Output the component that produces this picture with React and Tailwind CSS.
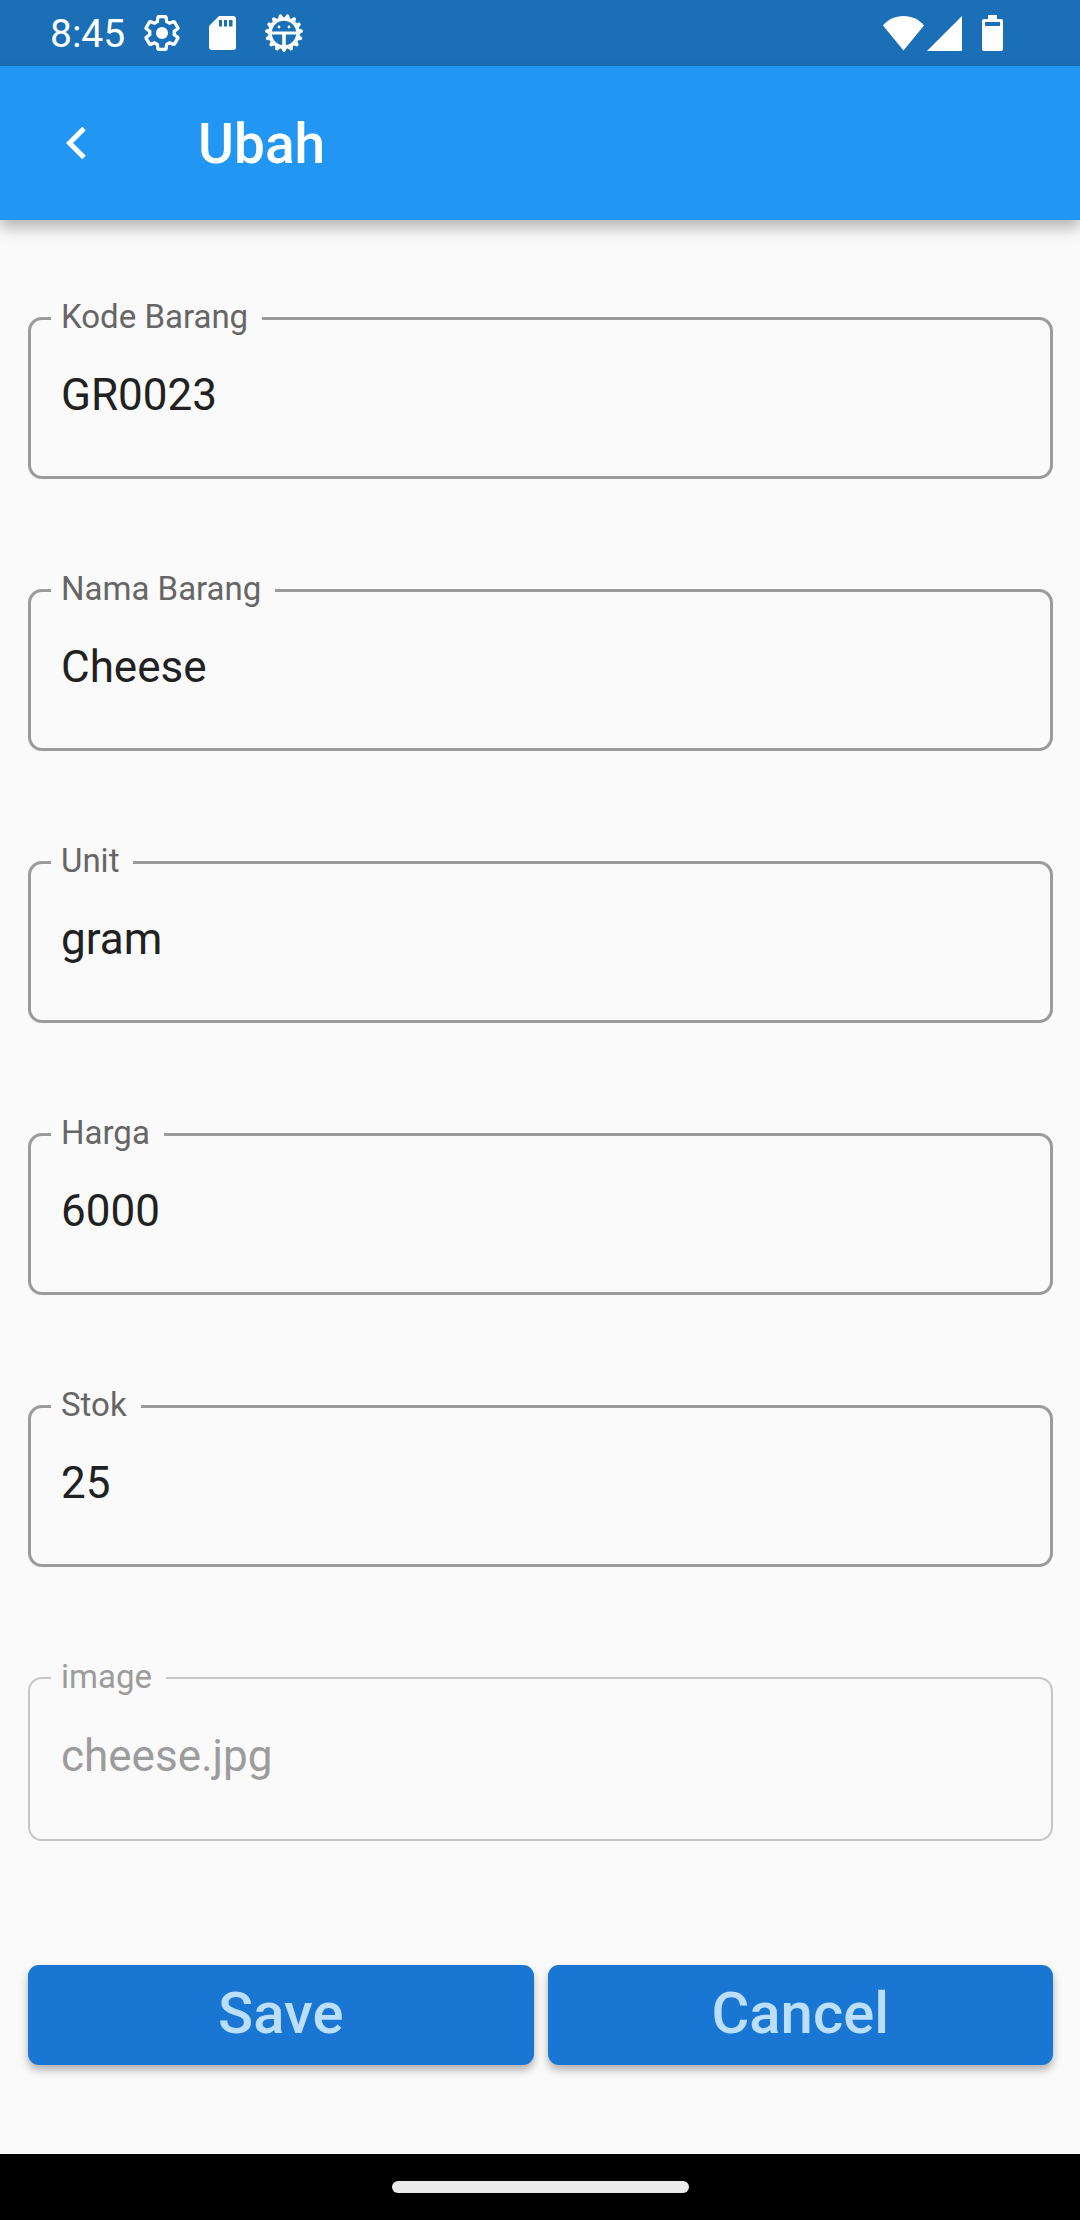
const fields = [
  { id: "kode", label: "Kode Barang", value: "GR0023" },
  { id: "nama", label: "Nama Barang", value: "Cheese" },
  { id: "unit", label: "Unit", value: "gram" },
  { id: "harga", label: "Harga", value: "6000" },
  { id: "stok", label: "Stok", value: "25" },
  { id: "image", label: "image", value: "cheese.jpg", disabled: true },
];

function GearIcon() {
  return (
    <svg className="size-9" viewBox="1 1 22 22" fill="none" aria-hidden="true">
      <path
        stroke="white"
        strokeWidth="2"
        strokeLinejoin="round"
        d="M19.43 12.98c.04-.32.07-.64.07-.98s-.03-.66-.07-.98l2.11-1.65c.19-.15.24-.42.12-.64l-2-3.46c-.09-.16-.26-.25-.44-.25-.06 0-.12.01-.17.03l-2.49 1c-.52-.4-1.08-.73-1.69-.98l-.38-2.65C14.46 2.18 14.25 2 14 2h-4c-.25 0-.46.18-.49.42l-.38 2.65c-.61.25-1.17.59-1.69.98l-2.49-1c-.06-.02-.12-.03-.18-.03-.17 0-.34.09-.43.25l-2 3.46c-.13.22-.07.49.12.64l2.11 1.65c-.04.32-.07.65-.07.98s.03.66.07.98l-2.11 1.65c-.19.15-.24.42-.12.64l2 3.46c.09.16.26.25.44.25.06 0 .12-.01.17-.03l2.49-1c.52.4 1.08.73 1.69.98l.38 2.65c.03.24.24.42.49.42h4c.25 0 .46-.18.49-.42l.38-2.65c.61-.25 1.17-.59 1.69-.98l2.49 1c.06.02.12.03.18.03.17 0 .34-.09.43-.25l2-3.46c.12-.22.07-.49-.12-.64l-2.11-1.65z"
      />
      <circle cx="12" cy="12" r="3.7" fill="white" />
    </svg>
  );
}

function SdCardIcon() {
  return (
    <svg className="h-[34px] w-[27px]" viewBox="0 0 27 34" aria-hidden="true">
      <path
        fill="white"
        fillRule="evenodd"
        d="M10 0H24a3 3 0 0 1 3 3V31a3 3 0 0 1-3 3H3a3 3 0 0 1-3-3V10ZM10 4V10.500H13V4ZM15 4V10.500H18V4ZM20 4V10.500H23.500V4Z"
      />
    </svg>
  );
}

function DebugIcon() {
  const teeth = Array.from({ length: 15 }, (_, i) => i * 24);
  return (
    <svg className="h-10 w-[38px]" viewBox="-19 -20 38 40" fill="none" stroke="white" aria-hidden="true">
      {teeth.map((angle) => (
        <path key={angle} d="M-2.600 14.500L-0.800 18.400H0.800L2.600 14.500Z" fill="white" strokeWidth="1" strokeLinejoin="round" transform={`rotate(${angle})`} />
      ))}
      <circle r="14" strokeWidth="3.6" />
      <path d="M-13 0H13" strokeWidth="3" />
      <path d="M0 0V14" strokeWidth="3.6" />
      <circle cx="-5" cy="-6" r="1.4" fill="white" stroke="none" />
      <circle cx="5" cy="-6" r="1.4" fill="white" stroke="none" />
    </svg>
  );
}

function StatusBar() {
  return (
    <div className="flex h-[66px] items-center justify-between bg-[#1a6fb7] pr-[77px] pl-[50px] text-white">
      <div className="flex items-center">
        <span className="pt-0.5 text-[39px] leading-[48px]">8:45</span>
        <div className="ml-[19px] flex items-center gap-[29px]">
          <GearIcon />
          <SdCardIcon />
          <DebugIcon />
        </div>
      </div>
      <div className="flex items-center">
        <svg className="h-[35px] w-[41px]" viewBox="0 0 41 35" fill="white" aria-hidden="true">
          <path d="M0 9.500C5 3.500 12 0 20.500 0S36 3.500 41 9.500L20.500 34.500Z" />
        </svg>
        <svg className="ml-[3px] size-[35px]" viewBox="0 0 35 35" fill="white" aria-hidden="true">
          <path d="M0 35L35 0V35Z" />
        </svg>
        <svg className="ml-5 h-9 w-[21px]" viewBox="0 0 21 36" fill="white" aria-hidden="true">
          <path fillRule="evenodd" d="M6 0H15V4H19a2 2 0 0 1 2 2V34a2 2 0 0 1-2 2H2a2 2 0 0 1-2-2V6a2 2 0 0 1 2-2H6ZM3 7V11H18V7Z" />
        </svg>
      </div>
    </div>
  );
}

function AppBar() {
  return (
    <header className="flex h-[154px] items-center bg-[#2196f3] text-white shadow-[0_8px_14px_0_rgba(0,0,0,0.28)]">
      <button type="button" aria-label="Kembali" className="flex h-full w-[152px] items-center justify-center">
        <svg className="h-[34px] w-5" viewBox="0 0 20 34" fill="none" aria-hidden="true">
          <path d="M18 2.500L3.500 17L18 31.500" stroke="white" strokeWidth="5" />
        </svg>
      </button>
      <h1 className="ml-[46px] pt-0.5 text-[55px] leading-[64px] font-medium">Ubah</h1>
    </header>
  );
}

function Field({ id, label, value, disabled }) {
  return (
    <fieldset
      className={
        disabled
          ? "rounded-[14px] border-2 border-[#c6c6c6] px-[21px] text-[#9c9c9c]"
          : "rounded-[14px] border-3 border-[#9b9b9b] px-5 text-[#212121]"
      }
    >
      <legend className="pr-[14px] pb-0.5 pl-[10px]">
        <label
          htmlFor={id}
          className={disabled ? "block text-[33px] leading-[38px]" : "block text-[33px] leading-[38px] text-[#666666]"}
        >
          {label}
        </label>
      </legend>
      <input
        id={id}
        type="text"
        defaultValue={value}
        disabled={disabled}
        className={
          disabled
            ? "block h-[141px] w-full bg-transparent pt-8 pr-3 pb-[57px] pl-[10px] text-[44px] leading-[52px] outline-none"
            : "block h-[138px] w-full bg-transparent pt-[31px] pr-3 pb-[55px] pl-[10px] text-[44px] leading-[52px] outline-none"
        }
      />
    </fieldset>
  );
}

function ActionButton({ children }) {
  return (
    <button
      type="button"
      className="h-[100px] flex-1 rounded-[11px] bg-[#1976d2] pb-1 text-[58px] leading-[68px] font-medium text-[#bbdefb] shadow-[0_5px_8px_0_rgba(0,0,0,0.3)]"
    >
      {children}
    </button>
  );
}

export default function App() {
  return (
    <div className="flex min-h-screen flex-col bg-[#fafafa] font-['Roboto',sans-serif]">
      <StatusBar />
      <AppBar />
      <main className="flex-1 pt-[78px] pr-[27px] pb-[88px] pl-7">
        <form>
          <div className="flex flex-col gap-[91px]">
            {fields.map((field) => (
              <Field key={field.id} {...field} />
            ))}
          </div>
          <div className="mt-[124px] flex gap-[14px]">
            <ActionButton>Save</ActionButton>
            <ActionButton>Cancel</ActionButton>
          </div>
        </form>
      </main>
      <footer className="flex h-[66px] items-center justify-center bg-black">
        <div className="h-3 w-[297px] rounded-full bg-[#ebebeb]" />
      </footer>
    </div>
  );
}
